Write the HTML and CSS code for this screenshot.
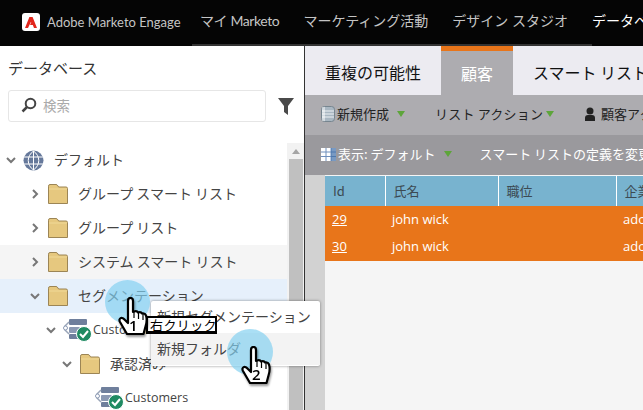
FILE: index.html
```html
<!DOCTYPE html>
<html lang="ja">
<head>
    <meta charset="UTF-8">
    <title>Adobe Marketo Engage</title>
    <link rel="stylesheet" href="styles.css">
</head>
<body>
    <svg class="defs" width="0" height="0">
        <defs>
            <g id="folder">
                <path d="M.5 19.5V2.2Q.5.5 2 .5h6q1.200 0 2 1.500l.6 1H18q1.500 0 1.500 1.500v15z" fill="#e6c87f" stroke="#9c8555"/>
                <path d="M1 5h18" stroke="#f0d998" fill="none"/>
            </g>
            <g id="segment">
                <rect x="6" y="0" width="18" height="6" rx="1" fill="#6f7f9c"/>
                <rect x="6" y="8" width="11" height="6" rx="1" fill="#8b99b3"/>
                <rect x="6" y="15" width="11" height="5" rx="1" fill="#6f7f9c"/>
                <path d="M6 3 2 7v4l4 4" fill="none" stroke="#9aa5b8" stroke-width="1.500"/>
                <circle cx="2.500" cy="9" r="2" fill="#fff" stroke="#8b99b3"/>
                <circle cx="21" cy="15" r="7.500" fill="#1f8a62" stroke="#fff"/>
                <path d="m17 15 3 3 5-6" fill="none" stroke="#fff" stroke-width="2"/>
            </g>
            <g id="hand">
                <path d="M9 37 2 25q-1.500-3 1-4 2-.5 4 2l3 3V4Q10 1 12.500 1T15 4v11l1-.5q3-1 4 1 3-1 4 1 3-.5 4 2 1.500 5-.5 11l-2 7.500z" fill="#fff" stroke="#000" stroke-width="2.200" stroke-linejoin="round"/>
                <path d="M16 15v6M20.500 16v6M25 17v6" fill="none" stroke="#000" stroke-width="1.200"/>
            </g>
        </defs>
    </svg>

    <header class="topbar">
        <div class="brand">
            <span class="brand-logo">
                <svg width="12" height="11" viewBox="0 0 12 11"><path d="M4.400 0H7.600L12 11H9L7.800 8H5L6.200 5.400 6 4.800 3 11H0z" fill="#e1251b"/></svg>
            </span>
            <span>Adobe Marketo Engage</span>
        </div>
        <nav class="topnav">
            <a class="home">マイ Marketo</a>
            <a>マーケティング活動</a>
            <a>デザイン スタジオ</a>
            <a class="current">データベース</a>
        </nav>
    </header>

    <div class="main">
        <aside class="sidebar">
            <h2 class="side-title">データベース</h2>
            <div class="search-row">
                <div class="search-box">
                    <svg width="16" height="16" viewBox="0 0 16 16"><circle cx="9.500" cy="6.500" r="4.800" fill="none" stroke="#444" stroke-width="2"/><path d="M6 10 1.500 14.500" stroke="#444" stroke-width="2.500"/></svg>
                    <span>検索</span>
                </div>
                <svg class="filter" width="16" height="17" viewBox="0 0 16 17"><path d="M0 0h16L10 8v9l-4-3V8z" fill="#4a4a4a"/></svg>
            </div>
            <div class="tree-wrap">
                <ul class="tree">
                    <li class="row lv0">
                        <svg class="chev" width="10" height="10" viewBox="0 0 10 10"><path d="m1 3 4 4 4-4" fill="none" stroke="#777" stroke-width="2"/></svg>
                        <svg class="globe" width="21" height="21" viewBox="0 0 21 21"><circle cx="10.500" cy="10.500" r="10" fill="#66799b"/><path d="M1 7h19M1 14h19M10.500 1v19M10.500 1c-7 5-7 14 0 19M10.500 1c7 5 7 14 0 19" fill="none" stroke="#fff" stroke-width="1"/></svg>
                        <span class="name">デフォルト</span>
                    </li>
                    <li class="row lv1">
                        <svg class="chev" width="10" height="10" viewBox="0 0 10 10"><path d="m3 1 4 4-4 4" fill="none" stroke="#777" stroke-width="2"/></svg>
                        <svg class="folder" width="20" height="20"><use href="#folder"/></svg>
                        <span class="name">グループ スマート リスト</span>
                    </li>
                    <li class="row lv1">
                        <svg class="chev" width="10" height="10" viewBox="0 0 10 10"><path d="m3 1 4 4-4 4" fill="none" stroke="#777" stroke-width="2"/></svg>
                        <svg class="folder" width="20" height="20"><use href="#folder"/></svg>
                        <span class="name">グループ リスト</span>
                    </li>
                    <li class="row lv1 hover">
                        <svg class="chev" width="10" height="10" viewBox="0 0 10 10"><path d="m3 1 4 4-4 4" fill="none" stroke="#777" stroke-width="2"/></svg>
                        <svg class="folder" width="20" height="20"><use href="#folder"/></svg>
                        <span class="name">システム スマート リスト</span>
                    </li>
                    <li class="row lv1 selected">
                        <svg class="chev" width="10" height="10" viewBox="0 0 10 10"><path d="m1 3 4 4 4-4" fill="none" stroke="#777" stroke-width="2"/></svg>
                        <svg class="folder" width="20" height="20"><use href="#folder"/></svg>
                        <span class="name">セグメンテーション</span>
                    </li>
                    <li class="row lv2">
                        <svg class="chev" width="10" height="10" viewBox="0 0 10 10"><path d="m1 3 4 4 4-4" fill="none" stroke="#777" stroke-width="2"/></svg>
                        <svg class="seg" width="29" height="23"><use href="#segment"/></svg>
                        <span class="name">Customers</span>
                    </li>
                    <li class="row lv3">
                        <svg class="chev" width="10" height="10" viewBox="0 0 10 10"><path d="m1 3 4 4 4-4" fill="none" stroke="#777" stroke-width="2"/></svg>
                        <svg class="folder" width="20" height="20"><use href="#folder"/></svg>
                        <span class="name">承認済み</span>
                    </li>
                    <li class="row lv4">
                        <svg class="seg" width="29" height="23"><use href="#segment"/></svg>
                        <span class="name">Customers</span>
                    </li>
                </ul>
                <div class="scrollbar">
                    <div class="scroll-up"></div>
                    <div class="scroll-thumb"></div>
                </div>
            </div>
        </aside>

        <section class="content">
            <div class="tabs">
                <div class="tab tab-first">重複の可能性</div>
                <div class="tab active">顧客</div>
                <div class="tab">スマート リスト</div>
            </div>
            <div class="toolbar">
                <span class="tool first">
                    <svg width="14" height="16" viewBox="0 0 14 16"><rect x=".5" y=".5" width="13" height="15" rx="3" fill="#a9b7c2" stroke="#76858f"/><path d="M1 5h12M1 8h12M1 11h12" stroke="#eef2f5"/><rect x="1" y="1" width="3" height="14" fill="#fff" opacity=".5"/></svg>
                    新規作成<i class="arrow gap"></i>
                </span>
                <span class="tool actions">リスト アクション<i class="arrow"></i></span>
                <span class="tool people">
                    <svg width="12" height="14" viewBox="0 0 12 14"><circle cx="6" cy="4" r="3.500" fill="#222"/><path d="M1 14v-3q0-3 3-3h4q3 0 3 3v3z" fill="#222"/></svg>
                    顧客アクション
                </span>
            </div>
            <div class="viewbar">
                <span class="tool first">
                    <svg width="15" height="13" viewBox="0 0 15 13"><rect width="15" height="13" fill="#fff"/><path d="M5 0v13M10 0v13M0 4h15M0 8.500h15" stroke="#6f8fbc"/><rect x="10" width="5" height="13" fill="#3f6ea8" opacity=".7"/></svg>
                    表示: デフォルト<i class="arrow gap"></i>
                </span>
                <span class="tool change">スマート リストの定義を変更</span>
            </div>
            <div class="grid-wrap">
                <div class="gutter"></div>
                <table class="grid">
                    <thead>
                        <tr><th class="c-id">Id</th><th class="c-name">氏名</th><th class="c-job">職位</th><th>企業名</th></tr>
                    </thead>
                    <tbody>
                        <tr><td><a>29</a></td><td>john wick</td><td></td><td>adobe</td></tr>
                        <tr><td><a>30</a></td><td>john wick</td><td></td><td>adobe</td></tr>
                    </tbody>
                </table>
            </div>
        </section>
    </div>

    <!-- 操作説明のオーバーレイ -->
    <div class="menu">
        <div class="menu-item">新規セグメンテーション</div>
        <div class="menu-item on">新規フォルダ</div>
    </div>
    <div class="spot spot1"></div>
    <div class="spot spot2"></div>
    <div class="callout">右クリック</div>
    <div class="pointer pointer1">
        <svg width="31" height="40"><use href="#hand"/></svg>
        <b>1</b>
    </div>
    <div class="pointer pointer2">
        <svg width="31" height="40"><use href="#hand"/></svg>
        <b>2</b>
    </div>
</body>
</html>
```

FILE: styles.css
```css
* {
    box-sizing: border-box;
}
html, body {
    margin: 0;
    height: 410px;
    overflow: hidden;
}
body {
    position: relative;
    width: 643px;
    font-family: "Noto Sans CJK JP", "Noto Sans", sans-serif;
    font-size: 14px;
    color: #333;
    background: #fff;
}
.defs {
    position: absolute;
}
.topbar {
    position: relative;
    display: flex;
    align-items: center;
    height: 46px;
    padding-bottom: 2px;
    background: #050505;
    color: #c4c4c4;
    white-space: nowrap;
    overflow: hidden;
}
.topbar::after {
    content: "";
    position: absolute;
    left: 192px;
    bottom: 0;
    width: 400px;
    height: 2px;
    background: #333;
}
.brand {
    display: flex;
    align-items: center;
    gap: 7px;
    width: 200px;
    flex: none;
    padding-left: 22px;
    font-family: Lato, sans-serif;
    font-size: 13px;
}
.brand-logo {
    display: flex;
    align-items: center;
    justify-content: center;
    width: 18px;
    height: 18px;
    background: #fff;
    border-radius: 3px;
}
.topnav {
    display: flex;
    gap: 24px;
    height: 44px;
    line-height: 42px;
    font-family: Lato, "Noto Sans CJK JP", sans-serif;
    font-size: 14px;
}
.topnav .home {
    letter-spacing: -.4px;
}
.topnav a.current {
    color: #fff;
}
.main {
    display: flex;
    height: 364px;
}
.sidebar {
    width: 305px;
    flex: none;
    border-right: 1px solid #333;
    padding-top: 10px;
}
.side-title {
    margin: 0 0 0 8px;
    height: 24px;
    font-size: 15px;
    font-weight: 400;
    line-height: 24px;
    color: #333;
}
.search-row {
    display: flex;
    align-items: center;
    gap: 12px;
    margin: 10px 0 0 8px;
}
.search-box {
    display: flex;
    align-items: center;
    gap: 6px;
    width: 258px;
    height: 32px;
    padding: 0 0 2px 12px;
    border: 1px solid #e6e6e6;
    border-radius: 3px;
    color: #aaa;
    font-size: 13.500px;
}
.tree-wrap {
    display: flex;
    margin-top: 21px;
}
.tree {
    flex: 1;
    margin: 0;
    padding: 0;
    list-style: none;
}
.row {
    display: flex;
    align-items: center;
    height: 34px;
    white-space: nowrap;
    color: #444;
}
.name {
    padding-bottom: 2px;
}
.row.hover {
    background: #f5f5f5;
}
.row.selected {
    background: #e6f0fb;
}
.chev {
    flex: none;
    margin-right: 8px;
}
.folder {
    flex: none;
    margin-right: 10px;
}
.lv0 {
    padding-left: 6px;
}
.lv0 .chev {
    margin-right: 7px;
}
.globe {
    margin-right: 10px;
}
.lv1 {
    padding-left: 30px;
}
.lv2 {
    padding-left: 46px;
}
.lv2 .chev {
    margin-right: 7px;
}
.lv2 .seg, .lv4 .seg {
    margin-right: 1px;
}
.lv3 {
    padding-left: 62px;
}
.lv4 {
    padding-left: 95px;
}
.lv2 .name, .lv4 .name {
    font-family: "Open Sans", sans-serif;
    font-size: 12.500px;
}
.scrollbar {
    flex: none;
    width: 17px;
    background: #f2f2f2;
    padding: 0 1px 0 2px;
}
.scroll-up {
    height: 16px;
    display: flex;
    align-items: center;
    justify-content: center;
}
.scroll-up::before {
    content: "";
    border: 4px solid transparent;
    border-top: 0;
    border-bottom: 5px solid #a5a5a5;
}
.scroll-thumb {
    height: 260px;
    background: #c0c0c0;
}
.content {
    flex: 1;
    min-width: 0;
    overflow: hidden;
    background: #f5f5f5;
}
.tabs {
    display: flex;
    height: 49px;
    background: #ecebf1;
    color: #111;
    white-space: nowrap;
    font-size: 16px;
    overflow: hidden;
}
.tab {
    display: flex;
    align-items: center;
    flex: none;
    padding: 2px 20px 0;
}
.tab-first {
    width: 136px;
}
.active {
    width: 72px;
    justify-content: center;
    padding: 0;
    background: #adacb0;
    border-top: 5px solid #e8751a;
    color: #fff;
}
.toolbar, .viewbar {
    display: flex;
    align-items: center;
    height: 40px;
    padding-bottom: 1px;
    white-space: nowrap;
    font-size: 13px;
    overflow: hidden;
}
.toolbar {
    background: #adacb0;
    color: #222;
}
.viewbar {
    background: #9a999d;
    color: #fff;
}
.tool {
    display: flex;
    align-items: center;
    gap: 2px;
    flex: none;
    line-height: 16px;
    padding-bottom: 1px;
}
.tool.first {
    margin-left: 16px;
}
.tool.actions {
    margin-left: 30px;
    letter-spacing: .2px;
}
.tool.people {
    margin-left: 30px;
}
.tool.people svg {
    margin-right: 3px;
}
.tool.change {
    margin-left: 28px;
}
.arrow {
    display: block;
    width: 0;
    height: 0;
    border: 4px solid transparent;
    border-top: 6px solid #5da53a;
    border-bottom: 0;
    margin-left: 1px;
}
.arrow.gap {
    margin-left: 6px;
}
.grid-wrap {
    display: flex;
    height: 235px;
    overflow: hidden;
}
.gutter {
    width: 20px;
    flex: none;
    background: #d2d2d2;
}
.grid {
    width: 360px;
    flex: none;
    table-layout: fixed;
    height: 85px;
    border-collapse: collapse;
    font-size: 13px;
    align-self: flex-start;
    margin-top: 1px;
}
.grid th {
    height: 30px;
    padding: 0 8px 2px;
    background: #78b3cf;
    border-right: 1px solid #fff;
    color: #3c4a52;
    font-weight: 400;
    text-align: left;
}
.grid .c-id {
    width: 60px;
}
.grid .c-name {
    width: 113px;
}
.grid .c-job {
    width: 118px;
}
.grid td {
    height: 27px;
    padding: 0 7px 2px;
    background: #e8751a;
    color: #fff;
    font-family: "Open Sans", sans-serif;
    white-space: nowrap;
    overflow: hidden;
}
.grid a {
    text-decoration: underline;
}
.menu {
    position: absolute;
    left: 151px;
    top: 301px;
    width: 169px;
    height: 65px;
    background: #fff;
    border-radius: 2px;
    box-shadow: 0 0 3px rgba(0, 0, 0, .45);
    color: #444;
    font-size: 14px;
}
.menu-item {
    height: 32px;
    line-height: 30px;
    padding-left: 6px;
    white-space: nowrap;
}
.menu-item.on {
    background: #f3f3f3;
}
.spot {
    position: absolute;
    border-radius: 50%;
    background: rgba(130, 208, 240, .68);
}
.spot1 {
    left: 105px;
    top: 280px;
    width: 45px;
    height: 44px;
}
.spot2 {
    left: 227px;
    top: 329px;
    width: 46px;
    height: 46px;
}
.callout {
    position: absolute;
    left: 146px;
    top: 316px;
    width: 71px;
    height: 18px;
    background: #fff;
    border: 2px solid #000;
    border-bottom-width: 3px;
    color: #000;
    font-size: 13px;
    line-height: 13px;
    padding-left: 2px;
    letter-spacing: .4px;
    white-space: nowrap;
}
.pointer {
    position: absolute;
    width: 31px;
    height: 40px;
    filter: drop-shadow(1px 2px 1px rgba(0, 0, 0, .4));
}
.pointer svg {
    display: block;
}
.pointer b {
    position: absolute;
    left: 11px;
    top: 20px;
    color: #000;
    font-family: "Open Sans", sans-serif;
    font-size: 15px;
    font-weight: 600;
    line-height: 16px;
}
.pointer1 {
    left: 118px;
    top: 297px;
}
.pointer2 {
    left: 241px;
    top: 346px;
}
```
